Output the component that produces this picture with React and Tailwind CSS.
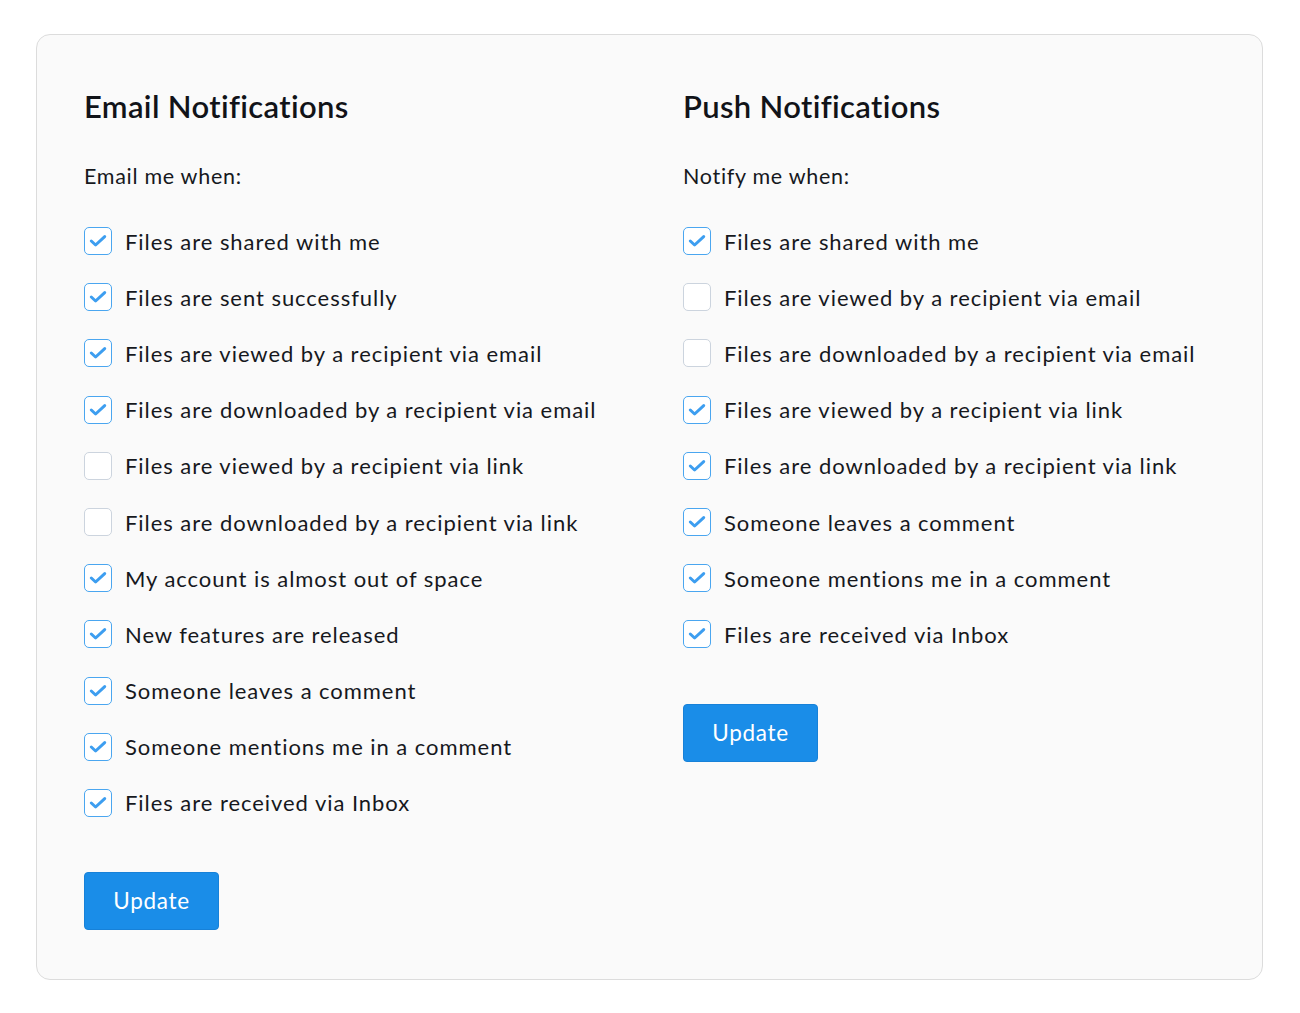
import React from "react";

const email = [
  ["Files are shared with me", true],
  ["Files are sent successfully", true],
  ["Files are viewed by a recipient via email", true],
  ["Files are downloaded by a recipient via email", true],
  ["Files are viewed by a recipient via link", false],
  ["Files are downloaded by a recipient via link", false],
  ["My account is almost out of space", true],
  ["New features are released", true],
  ["Someone leaves a comment", true],
  ["Someone mentions me in a comment", true],
  ["Files are received via Inbox", true],
];

const push = [
  ["Files are shared with me", true],
  ["Files are viewed by a recipient via email", false],
  ["Files are downloaded by a recipient via email", false],
  ["Files are viewed by a recipient via link", true],
  ["Files are downloaded by a recipient via link", true],
  ["Someone leaves a comment", true],
  ["Someone mentions me in a comment", true],
  ["Files are received via Inbox", true],
];

function Box({ checked }) {
  return checked ? (
    <span className="flex h-[28px] w-[28px] shrink-0 items-center justify-center rounded-[5px] border-[1.5px] border-[#4aa6f0] bg-white">
      <svg width="18" height="14" viewBox="0 0 18 14" fill="none">
        <path d="M2.3 7 L6.6 11 L15.7 2.6" stroke="#3d9ef0" strokeWidth="3" strokeLinecap="round" strokeLinejoin="round" />
      </svg>
    </span>
  ) : (
    <span className="h-[28px] w-[28px] shrink-0 rounded-[5px] border-[1.5px] border-[#ccd4de] bg-white" />
  );
}

function Column({ title, sub, items }) {
  return (
    <div className="flex flex-col items-start">
      <h2 className="text-[31px] font-semibold leading-[50px] text-[#111318] tracking-[0.35px]">{title}</h2>
      <p className="mt-[29px] text-[21.5px] leading-[32px] text-[#16181d] tracking-[0.7px]">{sub}</p>
      <ul className="mt-[21px] flex flex-col">
        {items.map(([t, c], i) => (
          <li key={i} className="flex h-[56.2px] items-center gap-[13px]">
            <Box checked={c} />
            <span className="text-[22px] text-[#16181d] tracking-[0.95px]">{t}</span>
          </li>
        ))}
      </ul>
      <button className="mt-[41px] h-[58px] w-[135px] rounded-[4px] border border-[#1781d8] bg-[#1a8de8] text-[22.5px] text-white tracking-[0.7px]">
        Update
      </button>
    </div>
  );
}

export default function App() {
  return (
    <div className="min-h-screen bg-white pt-[34px] px-[36px]" style={{ fontFamily: "Lato, 'Open Sans', sans-serif" }}>
      <div className="w-[1227px] rounded-[14px] border border-[#dcdcdc] bg-[#fafafa] pl-[47px] pt-[46px] pb-[49px] grid grid-cols-[599px_1fr] items-start">
        <Column title="Email Notifications" sub="Email me when:" items={email} />
        <Column title="Push Notifications" sub="Notify me when:" items={push} />
      </div>
    </div>
  );
}
